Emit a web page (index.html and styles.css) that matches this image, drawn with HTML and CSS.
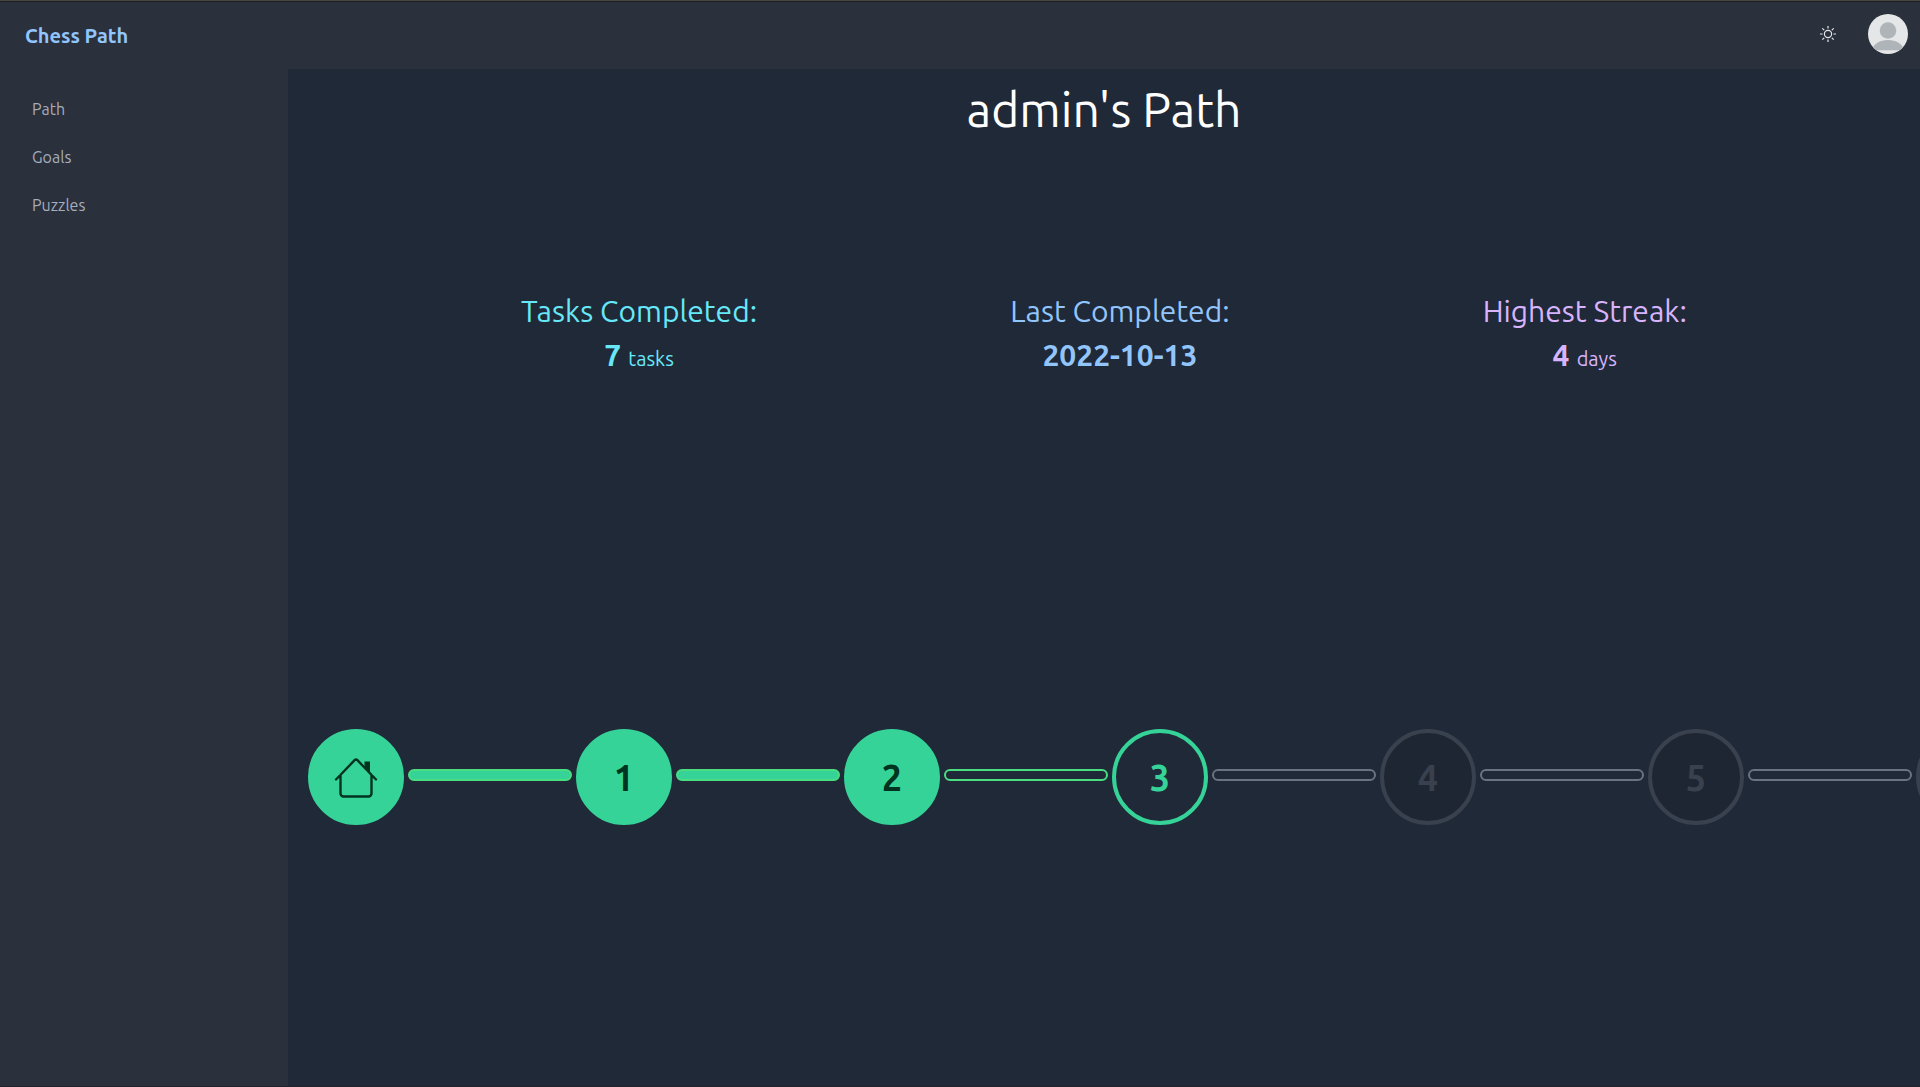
FILE: index.html
```html
<!DOCTYPE html>
<html lang="en">
<head>
<meta charset="utf-8">
<meta name="viewport" content="width=device-width, initial-scale=1">
<title>Chess Path</title>
<link rel="stylesheet" href="styles.css">
</head>
<body>
<header class="navbar">
  <a class="brand" href="#">Chess Path</a>
  <div class="navbar-actions">
    <button class="icon-button" type="button" aria-label="Toggle theme">
      <svg width="16" height="16" viewBox="0 0 16 16" fill="none" stroke="currentColor">
        <circle cx="8" cy="8" r="3.6" stroke-width="1.2"/>
        <path stroke-width="1.2" d="M8 0v2.6M8 13.4V16M0 8h2.6M13.4 8H16M2.3 2.3l1.900 1.900M11.800 11.800l1.900 1.900M2.300 13.700l1.900-1.900M11.800 4.200l1.900-1.900"/>
      </svg>
    </button>
    <button class="avatar" type="button" aria-label="Account">
      <svg width="40" height="40" viewBox="0 0 40 40">
        <rect width="40" height="40" fill="#e4e6e7"/>
        <circle cx="20" cy="16.5" r="8.3" fill="#aeb4b7"/>
        <path d="M4 36.3c1-6.500 8-10.300 16-10.300s15 3.800 16 10.300z" fill="#aeb4b7"/>
      </svg>
    </button>
  </div>
</header>
<div class="layout">
  <nav class="sidebar">
    <a href="#">Path</a>
    <a href="#">Goals</a>
    <a href="#">Puzzles</a>
  </nav>
  <main class="content">
    <h1 class="title">admin's Path</h1>
    <section class="stats">
      <div class="stat stat-tasks"><h2>Tasks Completed:</h2><p><strong>7 </strong>tasks</p></div>
      <div class="stat stat-last"><h2>Last Completed:</h2><p><strong>2022-10-13</strong></p></div>
      <div class="stat stat-streak"><h2>Highest Streak:</h2><p><strong>4 </strong>days</p></div>
    </section>
    <section class="track">
      <button class="node done" type="button" aria-label="Home">
        <svg width="44" height="42" viewBox="0 -1 44 42" fill="none" stroke="currentColor" stroke-width="2.400" stroke-linecap="round" stroke-linejoin="round">
          <path d="M2 22.500 20.600 3.200a2 2 0 0 1 2.800 0L42 22.500M6.500 18v18.500a3 3 0 0 0 3 3h25a3 3 0 0 0 3-3V18"/>
          <path fill="currentColor" stroke="none" d="M30.500 4.500h5.500v13l-5.500-6z"/>
        </svg>
      </button>
      <span class="link done"></span>
      <button class="node done" type="button">1</button>
      <span class="link done"></span>
      <button class="node done" type="button">2</button>
      <span class="link active"></span>
      <button class="node active" type="button">3</button>
      <span class="link"></span>
      <button class="node" type="button" disabled>4</button>
      <span class="link"></span>
      <button class="node" type="button" disabled>5</button>
      <span class="link"></span>
      <button class="node" type="button" aria-label="Next task" disabled></button>
    </section>
  </main>
</div>
</body>
</html>
```
FILE: styles.css
```css
* {
  box-sizing: border-box;
}

body {
  margin: 0;
  min-height: 100vh;
  display: flex;
  flex-direction: column;
  border-top: 1px solid #47483f;
  border-bottom: 1px solid #20242f;
  background: #2a303c;
  color: #fff;
  font-family: Ubuntu, "Noto Sans", sans-serif;
}

h1, h2, p {
  margin: 0;
  font-weight: 400;
}

a {
  color: inherit;
  text-decoration: none;
}

button {
  padding: 0;
  border: 0;
  background: none;
  color: inherit;
  font: inherit;
}

svg {
  display: block;
}

.navbar {
  height: 68px;
  padding: 0 12px 3px 25px;
  display: flex;
  align-items: center;
  justify-content: space-between;
  border-top: 1px solid #1b1d22;
}

.brand {
  padding-top: 4px;
  color: #93c5fd;
  font-size: 20px;
  font-weight: 700;
  line-height: 28px;
}

.navbar-actions {
  display: flex;
  align-items: center;
  gap: 32px;
}

.icon-button {
  color: #e5e7eb;
}

.avatar {
  border-radius: 50%;
  overflow: hidden;
}

.layout {
  flex: 1;
  display: flex;
}

.sidebar {
  width: 288px;
  flex: none;
  padding: 16px;
  display: flex;
  flex-direction: column;
}

.sidebar a {
  padding: 12px 16px;
  color: #a6adbb;
  font-size: 16px;
  line-height: 24px;
}

.content {
  flex: 1;
  min-width: 0;
  overflow: hidden;
  background: #1f2937;
}

.title {
  padding-top: 10px;
  text-align: center;
  font-size: 48px;
  line-height: 60px;
}

.stats {
  margin-top: 150px;
  display: flex;
  flex-wrap: wrap;
  justify-content: space-evenly;
}

.stat {
  padding: 0 20px;
  text-align: center;
  font-size: 20px;
  line-height: 44px;
}

.stat h2 {
  font-size: 30px;
}

.stat strong {
  font-size: 30px;
}

.stat-tasks {
  color: #67e8f9;
}

.stat-last {
  color: #93c5fd;
}

.stat-streak {
  color: #d8b4fe;
}

.track {
  margin-top: 348px;
  padding: 0 20px;
  display: flex;
  align-items: center;
  gap: 4px;
}

.node {
  width: 96px;
  height: 96px;
  flex: none;
  display: flex;
  align-items: center;
  justify-content: center;
  border: 4px solid #39414e;
  border-radius: 50%;
  background: #1f2633;
  color: #39414e;
  font-size: 36px;
  font-weight: 700;
}

.node.done {
  border-color: #36d399;
  background: #36d399;
  color: #003320;
}

.node.active {
  border-color: #36d399;
  background: none;
  color: #36d399;
}

.link {
  width: 164px;
  height: 12px;
  flex: none;
  margin-bottom: 4px;
  border: 2px solid #6b7280;
  border-radius: 6px;
}

.link.done {
  border-color: #4ade80;
  background: #36d399;
}

.link.active {
  border-color: #4ade80;
}
```
